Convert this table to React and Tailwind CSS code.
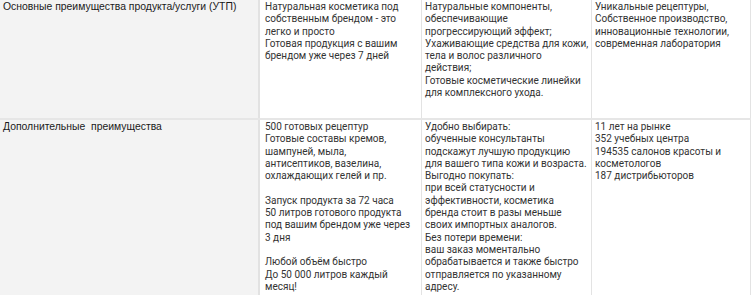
const rows = [
  {
    label: "Основные преимущества продукта/услуги (УТП)",
    cells: [
      "Натуральная косметика под\nсобственным брендом - это\nлегко и просто\nГотовая продукция с вашим\nбрендом уже через 7 дней",
      "Натуральные компоненты,\nобеспечивающие\nпрогрессирующий эффект;\nУхаживающие средства для кожи,\nтела и волос различного\nдействия;\nГотовые косметические линейки\nдля комплексного ухода.",
      "Уникальные рецептуры,\nСобственное производство,\nинновационные технологии,\nсовременная лаборатория",
    ],
    height: "h-[120px]",
  },
  {
    label: "Дополнительные\u00a0 преимущества",
    cells: [
      "500 готовых рецептур\nГотовые составы кремов,\nшампуней, мыла,\nантисептиков, вазелина,\nохлаждающих гелей и пр.\n\nЗапуск продукта за 72 часа\n50 литров готового продукта\nпод вашим брендом уже через\n3 дня\n\nЛюбой объём быстро\nДо 50 000 литров каждый\nмесяц!",
      "Удобно выбирать:\nобученные консультанты\nподскажут лучшую продукцию\nдля вашего типа кожи и возраста.\nВыгодно покупать:\nпри всей статусности и\nэффективности, косметика\nбренда стоит в разы меньше\nсвоих импортных аналогов.\nБез потери времени:\nваш заказ моментально\nобрабатывается и также быстро\nотправляется по указанному\nадресу.",
      "11 лет на рынке\n352 учебных центра\n194535 салонов красоты и\nкосметологов\n187 дистрибьюторов",
    ],
    height: "h-[200px]",
  },
];

const pads = ["pl-[5px]", "pl-[3px]", "pl-[3px]"];

export default function App() {
  return (
    <div className="w-[751px] h-[295px] overflow-hidden bg-white">
      {rows.map((row, i) => (
        <div
          key={i}
          className={`grid grid-cols-[260px_162px_170px_1fr] ${row.height} ${i === 0 ? "border-b-2 border-[#e6e6e6]" : ""}`}
        >
          <div className="bg-[#f3f3f3] border-r-2 border-[#e2e2e2] pl-[3px] pt-[1px] text-[10.4px] leading-[12.3px] text-[#1a1a1a] font-['Liberation_Sans',Arial,sans-serif] whitespace-nowrap">
            {row.label}
          </div>
          {row.cells.map((text, j) => (
            <div
              key={j}
              className={`border-r border-[#e3e3e3] ${pads[j]} pt-[1px] text-[10px] leading-[12.3px] text-[#333333] font-['Roboto',sans-serif] whitespace-pre overflow-hidden`}
            >
              {text}
            </div>
          ))}
        </div>
      ))}
    </div>
  );
}
